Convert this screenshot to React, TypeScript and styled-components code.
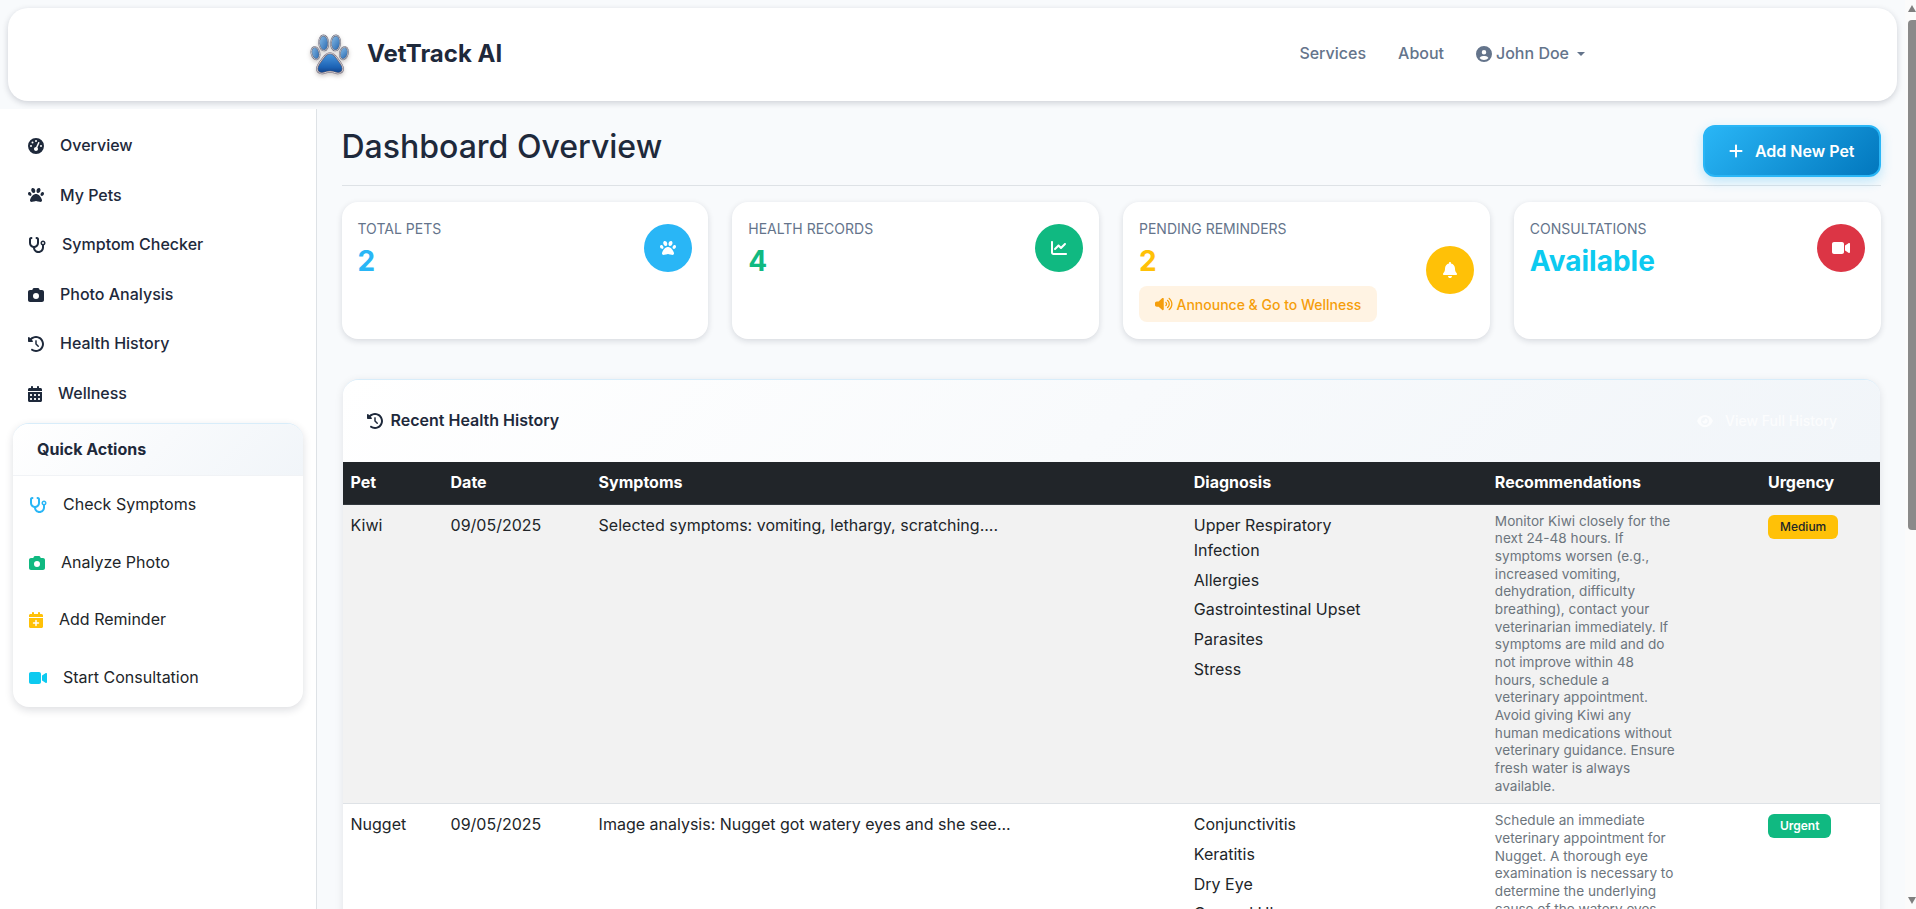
import React from 'react'
import styled, { createGlobalStyle } from 'styled-components'
import {
  FaBell,
  FaCalendarDays,
  FaCalendarPlus,
  FaCamera,
  FaChartLine,
  FaCircleUser,
  FaClockRotateLeft,
  FaEye,
  FaGaugeHigh,
  FaPaw,
  FaPlus,
  FaStethoscope,
  FaVideo,
  FaVolumeHigh,
} from 'react-icons/fa6'

const sideLinks = [
  { label: 'Overview', icon: <FaGaugeHigh />, iconWidth: 16 },
  { label: 'My Pets', icon: <FaPaw />, iconWidth: 16 },
  { label: 'Symptom Checker', icon: <FaStethoscope />, iconWidth: 18 },
  { label: 'Photo Analysis', icon: <FaCamera />, iconWidth: 16 },
  { label: 'Health History', icon: <FaClockRotateLeft />, iconWidth: 16 },
  { label: 'Wellness', icon: <FaCalendarDays />, iconWidth: 14 },
]

const quickActions = [
  { label: 'Check Symptoms', icon: <FaStethoscope />, iconWidth: 18, color: '#29b6f6' },
  { label: 'Analyze Photo', icon: <FaCamera />, iconWidth: 16, color: '#10b981' },
  { label: 'Add Reminder', icon: <FaCalendarPlus />, iconWidth: 14, color: '#ffc107' },
  { label: 'Start Consultation', icon: <FaVideo />, iconWidth: 18, color: '#0dcaf0' },
]

const columns = [
  { title: 'Pet', width: 100 },
  { title: 'Date', width: 148 },
  { title: 'Symptoms', width: 595 },
  { title: 'Diagnosis', width: 301 },
  { title: 'Recommendations', width: 273 },
  { title: 'Urgency', width: 120 },
]

const history = [
  {
    pet: 'Kiwi',
    date: '09/05/2025',
    symptoms: 'Selected symptoms: vomiting, lethargy, scratching....',
    diagnosis: ['Upper Respiratory Infection', 'Allergies', 'Gastrointestinal Upset', 'Parasites', 'Stress'],
    advice:
      'Monitor Kiwi closely for the next 24-48 hours. If symptoms worsen (e.g., increased vomiting, dehydration, difficulty breathing), contact your veterinarian immediately. If symptoms are mild and do not improve within 48 hours, schedule a veterinary appointment. Avoid giving Kiwi any human medications without veterinary guidance. Ensure fresh water is always available.',
    urgency: 'Medium',
  },
  {
    pet: 'Nugget',
    date: '09/05/2025',
    symptoms: 'Image analysis: Nugget got watery eyes and she see...',
    diagnosis: ['Conjunctivitis', 'Keratitis', 'Dry Eye', 'Corneal Ulcer'],
    advice:
      'Schedule an immediate veterinary appointment for Nugget. A thorough eye examination is necessary to determine the underlying cause of the watery eyes.',
    urgency: 'Urgent',
  },
]

const toes = [
  { cx: 76, cy: 156, rx: 12, ry: 19, angle: -14 },
  { cx: 101, cy: 125, rx: 14, ry: 23, angle: -4 },
  { cx: 137, cy: 125, rx: 14, ry: 23, angle: 4 },
  { cx: 162, cy: 156, rx: 12, ry: 19, angle: 14 },
]

const padPath =
  'M120 156c10 0 17 8 24 19 8 11 15 18 15 28 0 12-12 16-20 13-7-2-12-4-19-4s-12 2-19 4c-8 3-20-1-20-13 0-10 7-17 15-28 7-11 14-19 24-19z'

const PawLogo = () => (
  <LogoSvg viewBox="60 95 120 130">
    <defs>
      <linearGradient id="toeFill" x1="0" y1="0" x2="1" y2="1">
        <stop offset="0" stopColor="#8cc0ea" />
        <stop offset="1" stopColor="#2263ad" />
      </linearGradient>
      <linearGradient id="padFill" x1="0" y1="0" x2="0" y2="1">
        <stop offset="0" stopColor="#4c9ae0" />
        <stop offset="0.7" stopColor="#1c62b4" />
        <stop offset="1" stopColor="#123f84" />
      </linearGradient>
    </defs>
    {toes.map((toe) => (
      <g key={toe.cx} transform={`rotate(${toe.angle} ${toe.cx} ${toe.cy})`}>
        <ellipse cx={toe.cx} cy={toe.cy} rx={toe.rx} ry={toe.ry} fill="url(#toeFill)" stroke="#5d6478" strokeWidth="5" />
        <ellipse cx={toe.cx} cy={toe.cy} rx={toe.rx} ry={toe.ry} fill="none" stroke="#e4dfe2" strokeWidth="2" />
      </g>
    ))}
    <path d={padPath} fill="url(#padFill)" stroke="#6d6a7c" strokeWidth="6" />
    <path d={padPath} fill="none" stroke="#ece2df" strokeWidth="2.5" />
  </LogoSvg>
)

const App = () => {
  return (
    <>
      <GlobalStyle />
      <Page>
        <Navbar>
          <Brand>
            <PawLogo />
            VetTrack AI
          </Brand>
          <NavLinks>
            <NavLink>Services</NavLink>
            <NavLink>About</NavLink>
            <UserMenu>
              <FaCircleUser />
              John Doe
              <Caret />
            </UserMenu>
          </NavLinks>
        </Navbar>
        <Body>
          <Sidebar>
            {sideLinks.map((item) => (
              <SideLink key={item.label} $iconWidth={item.iconWidth}>
                {item.icon}
                {item.label}
              </SideLink>
            ))}
            <QuickCard>
              <QuickHeader>Quick Actions</QuickHeader>
              {quickActions.map((item) => (
                <QuickLink key={item.label} $color={item.color} $iconWidth={item.iconWidth}>
                  {item.icon}
                  <span>{item.label}</span>
                </QuickLink>
              ))}
            </QuickCard>
          </Sidebar>
          <Main>
            <TitleRow>
              <Title>Dashboard Overview</Title>
              <AddButton>
                <FaPlus />
                Add New Pet
              </AddButton>
            </TitleRow>
            <StatGrid>
              <StatCard>
                <StatBody>
                  <StatLabel>Total Pets</StatLabel>
                  <StatValue $color="#29b6f6">2</StatValue>
                </StatBody>
                <StatIcon $color="#29b6f6">
                  <FaPaw />
                </StatIcon>
              </StatCard>
              <StatCard>
                <StatBody>
                  <StatLabel>Health Records</StatLabel>
                  <StatValue $color="#10b981">4</StatValue>
                </StatBody>
                <StatIcon $color="#10b981">
                  <FaChartLine />
                </StatIcon>
              </StatCard>
              <StatCard>
                <StatBody>
                  <StatLabel>Pending Reminders</StatLabel>
                  <StatValue $color="#ffc107">2</StatValue>
                  <AnnounceButton>
                    <FaVolumeHigh />
                    Announce &amp; Go to Wellness
                  </AnnounceButton>
                </StatBody>
                <StatIcon $color="#ffc107">
                  <FaBell />
                </StatIcon>
              </StatCard>
              <StatCard>
                <StatBody>
                  <StatLabel>Consultations</StatLabel>
                  <StatValue $color="#0dcaf0">Available</StatValue>
                </StatBody>
                <StatIcon $color="#dc3545" $iconWidth={18}>
                  <FaVideo />
                </StatIcon>
              </StatCard>
            </StatGrid>
            <HistoryCard>
              <HistoryHeader>
                <HistoryTitle>
                  <FaClockRotateLeft />
                  Recent Health History
                </HistoryTitle>
                <GhostLink>
                  <FaEye />
                  View Full History
                </GhostLink>
              </HistoryHeader>
              <HistoryTable>
                <thead>
                  <tr>
                    {columns.map((col) => (
                      <HeadCell key={col.title} style={{ width: col.width }}>
                        {col.title}
                      </HeadCell>
                    ))}
                  </tr>
                </thead>
                <tbody>
                  {history.map((row) => (
                    <Row key={row.pet}>
                      <Cell>{row.pet}</Cell>
                      <Cell>{row.date}</Cell>
                      <Cell>{row.symptoms}</Cell>
                      <Cell>
                        <DiagnosisList>
                          {row.diagnosis.map((d) => (
                            <li key={d}>{d}</li>
                          ))}
                        </DiagnosisList>
                      </Cell>
                      <Cell>
                        <Advice>{row.advice}</Advice>
                      </Cell>
                      <Cell>
                        <Badge $urgent={row.urgency === 'Urgent'}>{row.urgency}</Badge>
                      </Cell>
                    </Row>
                  ))}
                </tbody>
              </HistoryTable>
            </HistoryCard>
          </Main>
        </Body>
        <ScrollTrack>
          <ScrollArrow />
          <ScrollThumb />
          <ScrollArrow $down />
        </ScrollTrack>
      </Page>
    </>
  )
}

const GlobalStyle = createGlobalStyle`
  * {
    box-sizing: border-box;
  }

  html,
  body {
    margin: 0;
    height: 100%;
    overflow: hidden;
  }

  body {
    font-family: Inter, "Liberation Sans", sans-serif;
    font-size: 16px;
    line-height: 1.6;
    color: #212529;
    background-color: #f8fafc;
  }
`

const Page = styled.div`
  display: flex;
  flex-direction: column;
  height: 909px;
  padding-right: 11px;
  overflow: hidden;
`

const Navbar = styled.nav`
  flex: none;
  display: flex;
  align-items: center;
  justify-content: space-between;
  height: 93px;
  margin: 8px;
  padding: 0 312px 1px 302px;
  background-color: #ffffff;
  border-radius: 20px;
  box-shadow: 0 2px 6px rgba(15, 23, 42, 0.18);
`

const Brand = styled.div`
  display: flex;
  align-items: center;
  gap: 17px;
  font-size: 24px;
  font-weight: 700;
  color: #1e293b;
`

const LogoSvg = styled.svg`
  width: 40px;
  height: 43px;
  filter: drop-shadow(0 2px 2px rgba(60, 40, 30, 0.25));
`

const NavLinks = styled.div`
  display: flex;
  align-items: center;
  gap: 32px;
`

const NavLink = styled.a`
  font-weight: 500;
  color: #64748b;
`

const UserMenu = styled(NavLink)`
  display: flex;
  align-items: center;
  gap: 4px;

  svg {
    font-size: 16px;
  }
`

const Caret = styled.i`
  margin-left: 4px;
  border-top: 4.5px solid #64748b;
  border-left: 4.5px solid transparent;
  border-right: 4.5px solid transparent;
`

const Body = styled.div`
  flex: 1;
  display: flex;
  min-height: 0;
`

const Sidebar = styled.aside`
  flex: none;
  width: 317px;
  padding: 12px 13px;
  background-color: #ffffff;
  border-right: 1px solid #dee2e6;
`

const SideLink = styled.a<{ $iconWidth: number }>`
  display: flex;
  align-items: center;
  gap: 16px;
  padding: 12px 15px;
  font-weight: 500;
  color: #1e293b;

  svg {
    flex: none;
    height: 16px;
    width: ${({ $iconWidth }) => $iconWidth}px;
  }
`

const QuickCard = styled.section`
  margin-top: 4px;
  background-color: #ffffff;
  border-top: 1px solid #d8edfa;
  border-radius: 16px;
  box-shadow: 0 3px 8px rgba(15, 23, 42, 0.14);
  overflow: hidden;
`

const QuickHeader = styled.h3`
  margin: 0;
  padding: 13px 24px;
  font-size: 16px;
  line-height: 1.6;
  font-weight: 700;
  color: #1e293b;
  background: linear-gradient(135deg, #ffffff, #f1f5f9);
  border-bottom: 1px solid #f1f3f6;
`

const QuickLink = styled.a<{ $color: string; $iconWidth: number }>`
  display: flex;
  align-items: center;
  gap: 16px;
  padding: 16px;

  svg {
    flex: none;
    height: 16px;
    width: ${({ $iconWidth }) => $iconWidth}px;
    color: ${({ $color }) => $color};
  }
`

const Main = styled.main`
  flex: 1;
  min-width: 0;
  padding: 16px 24.5px 0;
  overflow: hidden;
`

const TitleRow = styled.div`
  display: flex;
  align-items: center;
  justify-content: space-between;
  padding-bottom: 8px;
  margin-bottom: 16px;
  border-bottom: 1px solid #dee2e6;
`

const Title = styled.h1`
  margin: 0 0 8px;
  font-size: 32px;
  line-height: 1.2;
  font-weight: 500;
  color: #1e293b;
`

const AddButton = styled.button`
  display: flex;
  align-items: center;
  gap: 12px;
  height: 52px;
  padding: 0 24px;
  font-family: inherit;
  font-size: 16px;
  font-weight: 600;
  color: #ffffff;
  background: linear-gradient(135deg, #29b6f6, #0277bd);
  border: 2px solid #29b6f6;
  border-radius: 12px;
  box-shadow: 0 4px 12px rgba(41, 182, 246, 0.3);

  svg {
    width: 14px;
    height: 16px;
  }
`

const StatGrid = styled.div`
  display: grid;
  grid-template-columns: repeat(4, 1fr);
  gap: 24px;
  margin-bottom: 40px;
`

const StatCard = styled.article`
  display: flex;
  align-items: center;
  justify-content: space-between;
  height: 137px;
  padding: 16px;
  background-color: #ffffff;
  border-radius: 16px;
  box-shadow: 0 2px 6px rgba(15, 23, 42, 0.14);
`

const StatBody = styled.div`
  align-self: flex-start;
`

const StatLabel = styled.div`
  height: 22px;
  font-size: 14px;
  line-height: 22px;
  text-transform: uppercase;
  color: #64748b;
`

const StatValue = styled.div<{ $color: string }>`
  font-size: 28px;
  line-height: 42px;
  font-weight: 700;
  color: ${({ $color }) => $color};
`

const StatIcon = styled.div<{ $color: string; $iconWidth?: number }>`
  flex: none;
  display: flex;
  align-items: center;
  justify-content: center;
  align-self: flex-start;
  width: 48px;
  height: 48px;
  margin-top: 6px;
  color: #ffffff;
  background-color: ${({ $color }) => $color};
  border-radius: 50%;

  svg {
    height: 16px;
    width: ${({ $iconWidth }) => $iconWidth ?? 16}px;
  }

  ${StatBody}:has(button) + & {
    margin-top: 28px;
  }
`

const AnnounceButton = styled.button`
  display: flex;
  align-items: center;
  gap: 4px;
  height: 36px;
  margin-top: 4px;
  padding: 0 16px;
  font-family: inherit;
  font-size: 14px;
  font-weight: 500;
  color: #f59e0b;
  background-color: #fff3e3;
  border: none;
  border-radius: 8px;

  svg {
    width: 17.5px;
    height: 14px;
  }
`

const HistoryCard = styled.section`
  margin: 0 0.5px 0 1px;
  background-color: #ffffff;
  border-top: 1px solid #d8edfa;
  border-radius: 16px 16px 0 0;
  box-shadow: 0 2px 8px rgba(15, 23, 42, 0.1);
  overflow: hidden;
`

const HistoryHeader = styled.header`
  display: flex;
  align-items: center;
  justify-content: space-between;
  height: 82px;
  padding: 0 43px 0 24px;
  background: linear-gradient(135deg, #ffffff, #f1f5f9);
`

const HistoryTitle = styled.h2`
  display: flex;
  align-items: center;
  gap: 8px;
  margin: 0;
  font-size: 16px;
  font-weight: 600;
  color: #1e293b;
`

const GhostLink = styled.a`
  display: flex;
  align-items: center;
  gap: 12px;
  font-size: 14px;
  font-weight: 500;
  color: rgba(255, 255, 255, 0.75);

  svg {
    width: 16px;
    height: 14px;
  }
`

const HistoryTable = styled.table`
  width: 100%;
  table-layout: fixed;
  border-collapse: collapse;
`

const HeadCell = styled.th`
  padding: 8px;
  font-weight: 700;
  text-align: left;
  color: #ffffff;
  background-color: #212529;
  border-bottom: 1px solid #32383e;
`

const Row = styled.tr`
  border-bottom: 1px solid #dee2e6;

  &:nth-child(odd) {
    background-color: #f2f2f2;
  }
`

const Cell = styled.td`
  padding: 8px;
  vertical-align: top;
`

const DiagnosisList = styled.ul`
  max-width: 200px;
  margin: 0;
  padding: 0;
  list-style: none;

  li {
    margin-bottom: 4px;
  }
`

const Advice = styled.div`
  max-width: 181px;
  font-size: 13.6px;
  line-height: 1.3;
  color: #6c757d;
`

const Badge = styled.span<{ $urgent: boolean }>`
  display: inline-block;
  height: 24px;
  margin-top: 2px;
  padding: 0 12px;
  font-size: 12px;
  line-height: 24px;
  font-weight: ${({ $urgent }) => ($urgent ? 600 : 500)};
  color: ${({ $urgent }) => ($urgent ? '#ffffff' : '#212529')};
  background-color: ${({ $urgent }) => ($urgent ? '#10b981' : '#ffc107')};
  border-radius: 6px;
  vertical-align: top;
`

const ScrollTrack = styled.div`
  position: fixed;
  top: 0;
  right: 0;
  bottom: 0;
  display: flex;
  flex-direction: column;
  align-items: flex-end;
  width: 11px;
  padding: 5px 0;
  background-color: #fbfbfb;
`

const ScrollArrow = styled.i<{ $down?: boolean }>`
  flex: none;
  border-left: 4px solid transparent;
  border-right: 4px solid transparent;
  ${({ $down }) =>
    $down
      ? 'margin-top: auto; border-top: 7px solid #7f7f7f;'
      : 'border-bottom: 7px solid #7f7f7f;'}
`

const ScrollThumb = styled.div`
  flex: none;
  width: 8px;
  height: 510px;
  margin-top: 8px;
  background-color: #8a8a8a;
  border-radius: 4px 0 0 4px;
`

export default App
